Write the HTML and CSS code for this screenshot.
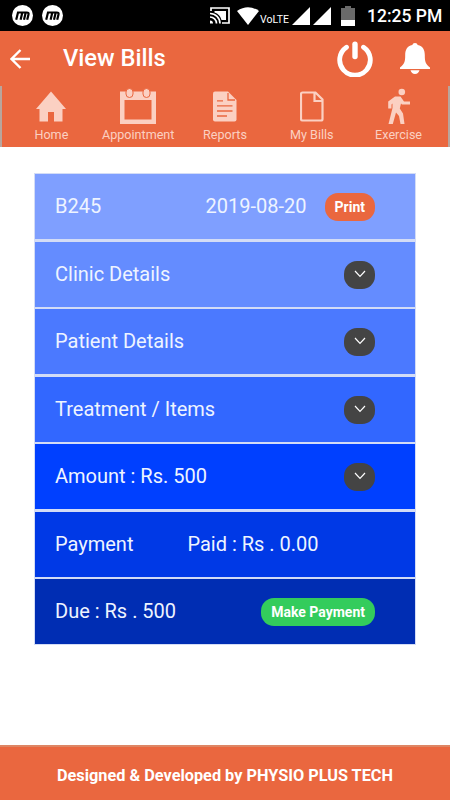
FILE: index.html
```html
<!DOCTYPE html>
<html lang="en">
<head>
    <meta charset="UTF-8">
    <meta name="viewport" content="width=device-width, initial-scale=1.0">
    <title>View Bills</title>
    <link rel="stylesheet" href="styles.css">
</head>
<body>
    <div class="status-bar">
        <div class="status-left">
            <svg width="21" height="21" viewBox="0 0 21 21"><circle cx="10.5" cy="10.5" r="10.5" fill="#fff"/><path d="M4.200 14.800 6 7.500H14.800Q17 7.500 16.500 9.500L15.200 14.800M8.600 14.800 10.200 8M12 14.800 13.600 8" fill="none" stroke="#000" stroke-width="2.200"/></svg>
            <svg width="21" height="21" viewBox="0 0 21 21"><circle cx="10.5" cy="10.5" r="10.5" fill="#fff"/><path d="M4.200 14.800 6 7.500H14.800Q17 7.500 16.500 9.500L15.200 14.800M8.600 14.800 10.200 8M12 14.800 13.600 8" fill="none" stroke="#000" stroke-width="2.200"/></svg>
        </div>
        <div class="status-right">
            <svg class="cast" width="20" height="17" viewBox="0 0 20 17"><path d="M1 4V1H19V16H12" fill="none" stroke="#fff" stroke-width="1.700"/><path d="M4.500 4H16V13H11.500Q10 7 4.500 5.500Z" fill="#fff"/><path d="M0 6.500A10 10 0 0 1 10 16.500M0 10A6.500 6.500 0 0 1 6.500 16.500" fill="none" stroke="#fff" stroke-width="1.700"/><path d="M0 13.500A3 3 0 0 1 3 16.500H0Z" fill="#fff"/></svg>
            <svg class="wifi" width="22" height="18" viewBox="0 0 22 18"><path d="M0 4Q11-3.500 22 4L11 18Z" fill="#fff"/></svg>
            <span class="volte">VoLTE</span>
            <svg class="signal" width="18" height="18" viewBox="0 0 18 18"><path d="M18 0V18H0Z" fill="#fff"/></svg>
            <svg class="signal-two" width="18" height="18" viewBox="0 0 18 18"><path d="M18 0V18H0Z" fill="#fff"/></svg>
            <svg class="battery" width="14" height="20" viewBox="0 0 14 20"><path d="M0 2H4V0H10V2H14V14H0Z" fill="#6a6a6a"/><path d="M0 14H14V20H0Z" fill="#fff"/></svg>
            <span class="clock">12:25 PM</span>
        </div>
    </div>

    <header class="header">
        <button class="icon-btn"><svg width="20" height="20" viewBox="0 0 20 20"><path d="M20 10H2M10.500 1 1.500 10 10.500 19" fill="none" stroke="#fff" stroke-width="2.400"/></svg></button>
        <h1 class="title">View Bills</h1>
        <button class="icon-btn power"><svg width="36" height="36" viewBox="0 0 36 36"><path d="M9.500 6.200A15.300 15.300 0 1 0 26.500 6.200" fill="none" stroke="#fff" stroke-width="4.800" stroke-linecap="round"/><path d="M18 3.200V15.500" stroke="#fff" stroke-width="5.400" stroke-linecap="round"/></svg></button>
        <button class="icon-btn"><svg width="30" height="31" viewBox="0 0 30 31"><path d="M15 0Q17.300 0 17.700 2C23 3 24.800 7 24.800 12C24.800 19 25.500 21 30 24.500V26H0V24.500C4.500 21 5.200 19 5.200 12C5.200 7 7 3 12.300 2Q12.700 0 15 0ZM10.500 27.300H19.500Q18.500 31 15 31T10.500 27.300Z" fill="#fff"/></svg></button>
    </header>

    <nav class="tabs">
        <a class="tab" href="#">
            <svg width="30" height="36" viewBox="0 0 30 36"><path d="M15 3.500 30 21H26.500V33.500H18V24H12V33.500H3.500V21H0Z" fill="#fbd0c2"/></svg>
            Home
        </a>
        <a class="tab" href="#">
            <svg width="36" height="36" viewBox="0 0 36 36"><path d="M0 3.500H36V36H0ZM4.500 12V31.500H31.500V12Z" fill="#fbd0c2" fill-rule="evenodd"/><rect x="6" y="0.500" width="7" height="9" rx="3.500" fill="#fbd0c2" stroke="#ea673f"/><rect x="23" y="0.500" width="7" height="9" rx="3.500" fill="#fbd0c2" stroke="#ea673f"/></svg>
            Appointment
        </a>
        <a class="tab" href="#">
            <svg width="24" height="36" viewBox="0 0 24 36"><path d="M2 3.500H15L23.500 12V31.500Q23.500 33.500 21.500 33.500H2Q0 33.500 0 31.500V5.500Q0 3.500 2 3.500Z" fill="#fbd0c2"/><path d="M15 5V12H22M4 12.800H10M4 17.800H19.500M4 23H19.500M4 28H14" fill="none" stroke="#ea673f" stroke-width="1.300"/></svg>
            Reports
        </a>
        <a class="tab" href="#">
            <svg width="24" height="36" viewBox="0 0 24 36"><path d="M2.500 4.500H15.500L22.500 11.500V31Q22.500 32.500 21 32.500H2.500Q1 32.500 1 31V6Q1 4.500 2.500 4.500ZM14.500 4.500V13H22.500" fill="none" stroke="#fbd0c2" stroke-width="2.200"/></svg>
            My Bills
        </a>
        <a class="tab" href="#">
            <svg width="24" height="36" viewBox="0 0 24 36"><circle cx="14.800" cy="4" r="3.300" fill="#fbd0c2"/><path d="M8 8.500H13.500L17 13.500H23V16.500H15L14 15.500L12.800 20.500L16 25.500L17.500 36H13.500L12 28L9 24.500L5.800 36H1.500L5.500 20V15.500L4.500 16.500V20.500H1.200V13.500Z" fill="#fbd0c2"/></svg>
            Exercise
        </a>
    </nav>

    <main class="content">
        <div class="bill-list">
            <div class="row row-1">
                <span>B245</span>
                <span class="date">2019-08-20</span>
                <button class="btn btn-print">Print</button>
            </div>
            <div class="row row-2">
                <span>Clinic Details</span>
                <button class="btn btn-toggle"><svg width="12" height="8" viewBox="0 0 12 8"><path d="M1 1 6 6.300 11 1" fill="none" stroke="#fff" stroke-width="1.200"/></svg></button>
            </div>
            <div class="row row-3">
                <span>Patient Details</span>
                <button class="btn btn-toggle"><svg width="12" height="8" viewBox="0 0 12 8"><path d="M1 1 6 6.300 11 1" fill="none" stroke="#fff" stroke-width="1.200"/></svg></button>
            </div>
            <div class="row row-4">
                <span>Treatment / Items</span>
                <button class="btn btn-toggle"><svg width="12" height="8" viewBox="0 0 12 8"><path d="M1 1 6 6.300 11 1" fill="none" stroke="#fff" stroke-width="1.200"/></svg></button>
            </div>
            <div class="row row-5">
                <span>Amount : Rs. 500</span>
                <button class="btn btn-toggle"><svg width="12" height="8" viewBox="0 0 12 8"><path d="M1 1 6 6.300 11 1" fill="none" stroke="#fff" stroke-width="1.200"/></svg></button>
            </div>
            <div class="row row-6">
                <span>Payment</span>
                <span class="paid">Paid : Rs . 0.00</span>
            </div>
            <div class="row row-7">
                <span>Due : Rs . 500</span>
                <button class="btn btn-pay">Make Payment</button>
            </div>
        </div>
    </main>

    <footer class="footer">Designed &amp; Developed by PHYSIO PLUS TECH</footer>
</body>
</html>
```
FILE: styles.css
```css
* {
    margin: 0;
    padding: 0;
    box-sizing: border-box;
}

body {
    font-family: Roboto, Arial, sans-serif;
    height: 100vh;
    display: flex;
    flex-direction: column;
    background: #fff;
    overflow: hidden;
}

svg {
    display: block;
    flex: none;
}

button {
    font-family: inherit;
    border: none;
    background: none;
    cursor: pointer;
}

/* Status bar */
.status-bar {
    height: 31px;
    padding: 0 8px 0 12px;
    display: flex;
    justify-content: space-between;
    align-items: center;
    background: #000;
    color: #fff;
}

.status-left,
.status-right {
    display: flex;
    align-items: center;
}

.status-left {
    gap: 9px;
}

.wifi {
    margin-left: 7px;
}

.volte {
    width: 29px;
    margin: 8px 0 0 1px;
    font-size: 10.5px;
    line-height: 12px;
}

.signal {
    margin-left: 3px;
}

.signal-two {
    margin-left: 3px;
}

.battery {
    margin-left: 10px;
}

.clock {
    margin-left: 12px;
    width: 75px;
    font-size: 17.5px;
    font-weight: 500;
    white-space: nowrap;
}

/* Header */
.header {
    height: 55px;
    padding: 0 20px 0 10px;
    display: flex;
    align-items: center;
    background: #ea673f;
}

.title {
    margin: -1px 0 0 33px;
    color: #fff;
    font-size: 23.7px;
    font-weight: 500;
}

.power {
    margin-left: auto;
    margin-right: 27px;
}

/* Tabs */
.tabs {
    height: 61px;
    padding: 0 6px;
    display: flex;
    background: #ea673f;
    border: solid #b9a59d;
    border-width: 0 2px;
}

.tab {
    flex: 1;
    padding-top: 2px;
    display: flex;
    flex-direction: column;
    align-items: center;
    gap: 3px;
    color: #fbd0c2;
    font-size: 12.6px;
    line-height: 16px;
    text-decoration: none;
}

/* Bill */
.content {
    flex: 1;
    padding: 26px 34px 0;
}

.bill-list {
    padding: 1px;
    display: grid;
    gap: 2.5px;
    background: #d3dcf6;
}

.row {
    height: 65px;
    padding: 0 40px 1px 20px;
    display: flex;
    align-items: center;
    color: #eef4ff;
    font-size: 20px;
}

.row-1 { background: #7f9fff; }
.row-2 { background: #648cff; }
.row-3 { background: #4b79ff; }
.row-4 { background: #3267ff; }
.row-5 { background: #0040ff; }
.row-6 { background: #0039e6; }
.row-7 { background: #002db3; }

.date {
    margin-left: auto;
}

.paid {
    margin-left: 54px;
}

.btn {
    height: 28px;
    margin-top: 2px;
    margin-left: auto;
    padding: 0 10px;
    border-radius: 13px;
    color: #fff;
    font-size: 14px;
    font-weight: 700;
}

.btn-print {
    margin-left: 18px;
    background: #ea673f;
}

.btn-toggle {
    width: 31px;
    background: #444;
}

.btn-toggle svg {
    margin-top: -2px;
}

.btn-pay {
    background: #33cc5c;
}

/* Footer */
.footer {
    height: 55px;
    padding-top: 4px;
    display: flex;
    align-items: center;
    justify-content: center;
    background: #ea673f;
    border-top: 2px solid #de8664;
    color: #fff;
    font-size: 16.3px;
    font-weight: 700;
}
```
